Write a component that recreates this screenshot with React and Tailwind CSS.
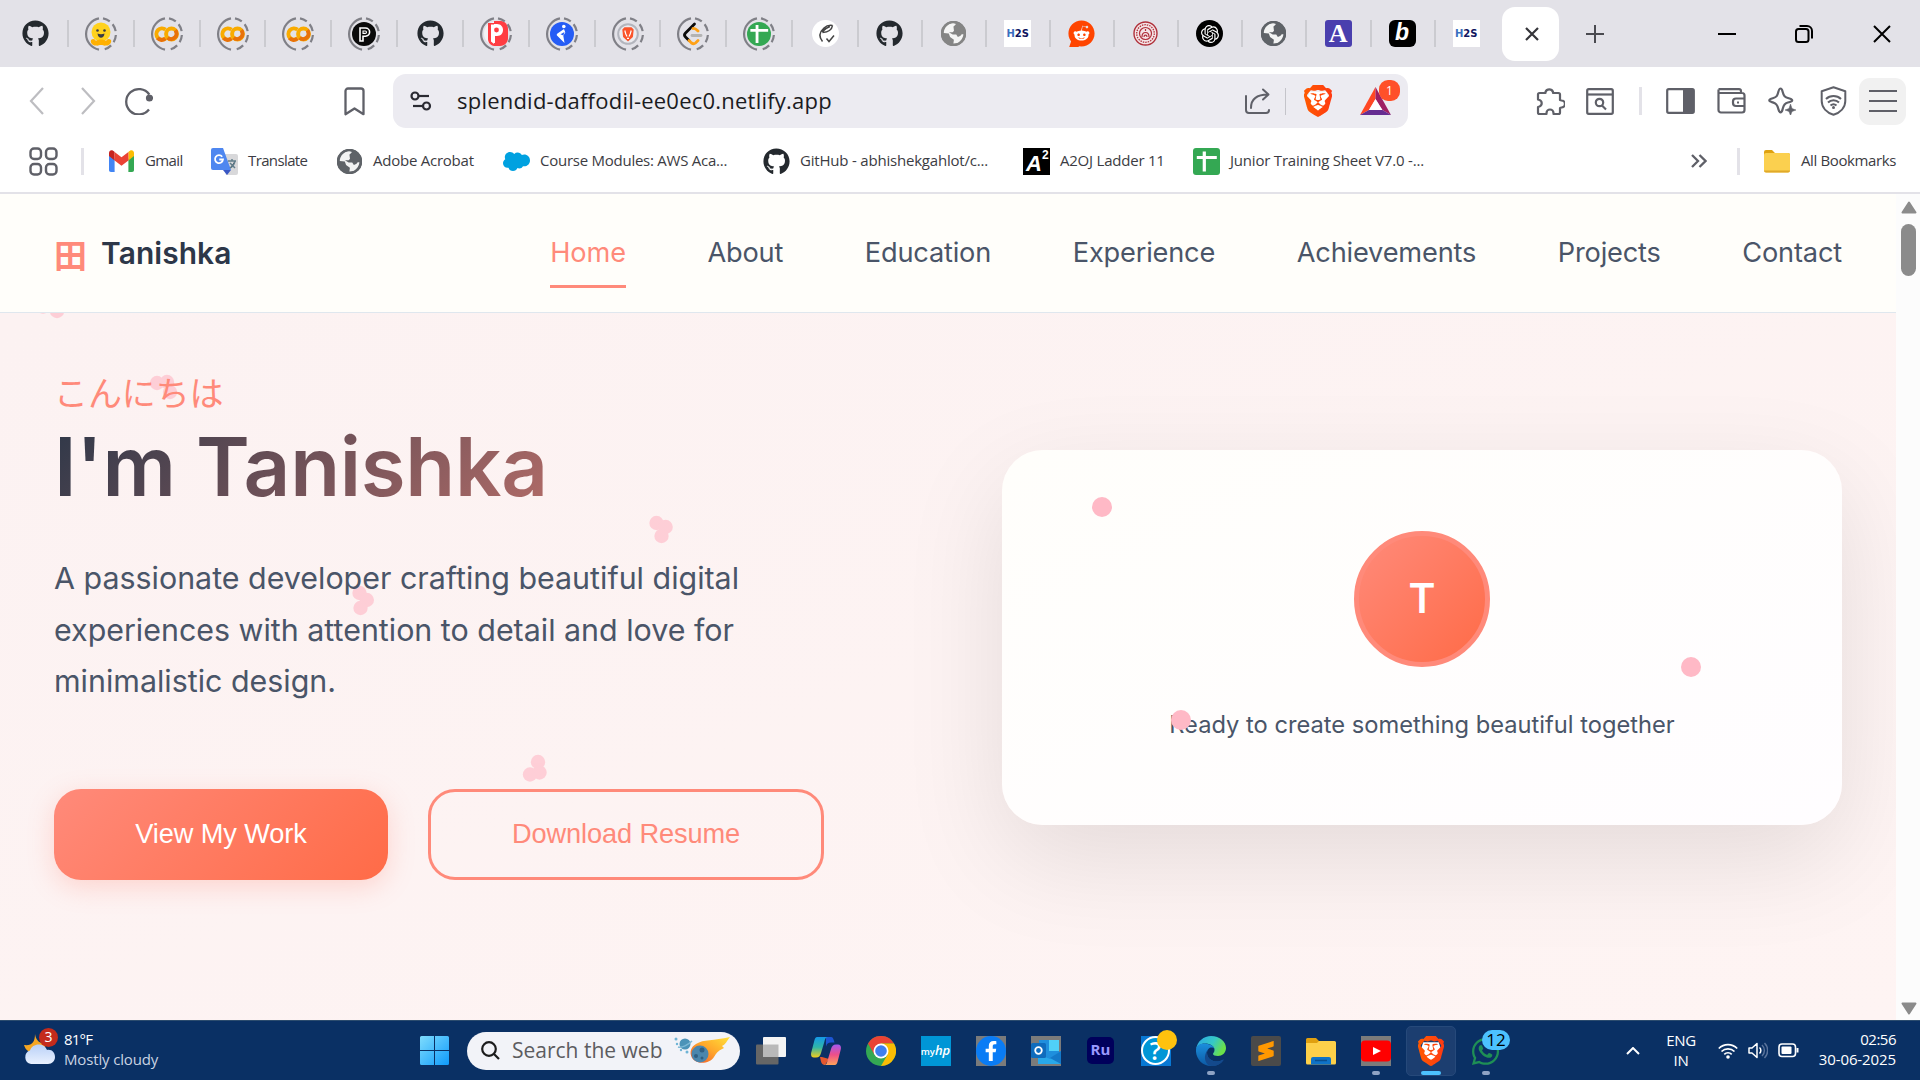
import React from "react";
import { FaGithub, FaWhatsapp, FaFacebookF, FaReddit } from "react-icons/fa";
import { SiOpenai, SiBrave, SiSalesforce, SiSublimetext } from "react-icons/si";

/* ---------- small brand drawings ---------- */

const Globe = ({ color = "#5f6368", size = 25 }) => (
  <svg width={size} height={size} viewBox="0 0 24 24">
    <circle cx="12" cy="12" r="12" fill={color} />
    <path d="M9.2 2.6c2-.5 3.8-.4 5.2.2L12 5.500l2.300 2-3.100 3.200H7.600l3.600 2.300h3.400l1.600 2.400 2.600-1.200c.7-1.600 1.400-1.600 2.700-1.500-.3 3.600-2.600 7-5.900 8.500l-3.700.4.500-3.600-3.700-2.600-1.200-3.400-4.800-.4C2.700 7.500 5.300 3.900 9.200 2.600z" fill="#fff" fillOpacity=".92" />
    <circle cx="12" cy="12" r="11.200" fill="none" stroke={color} strokeWidth="2" />
    <path d="M12 5.500l5-2 4 4.500.8 3.500-5.800-1-3.500-1z" fill={color} />
  </svg>
);

const Colab = () => (
  <svg width="25" height="16" viewBox="0 0 25 16" fill="none" strokeWidth="4">
    <path d="M11.500 3.600A5.600 5.600 0 1 0 11.500 12.400" stroke="#f9ab00" />
    <path d="M11.500 12.400A5.600 5.600 0 0 1 3.500 12" stroke="#e8710a" />
    <circle cx="17.500" cy="8" r="5.400" stroke="#f9ab00" />
    <path d="M13.700 11.800A5.400 5.400 0 0 0 21.300 4.200" stroke="#e8710a" />
  </svg>
);

const Hugging = () => (
  <svg width="22" height="24" viewBox="0 0 22 24">
    <circle cx="11" cy="10" r="9.500" fill="#ffd21e" />
    <path d="M1 18c2-2 4-1 5 1 2-2 8-2 10 0 1-2 3-3 5-1 1 3-2 6-5 5.500-2 .5-3-.5-5-.5s-3 1-5 .5C3 24 0 21 1 18z" fill="#ffb000" />
    <circle cx="7.500" cy="8.500" r="1.300" fill="#3a3b45" />
    <circle cx="14.500" cy="8.500" r="1.300" fill="#3a3b45" />
    <path d="M7.500 11.500c2 1 5 1 7 0-.3 3-1.800 4.200-3.500 4.200S7.800 14.500 7.500 11.500z" fill="#3a3b45" />
  </svg>
);

const Parallel = () => (
  <svg width="24" height="24" viewBox="0 0 24 24">
    <circle cx="12" cy="12" r="12" fill="#0b0b0b" />
    <path d="M8 19V6h5.500a4 4 0 0 1 0 8.200H11V19z" fill="none" stroke="#fff" strokeWidth="1.600" />
    <path d="M11 9h2.300a1.200 1.200 0 0 1 0 2.400H11z" fill="none" stroke="#fff" strokeWidth="1.100" />
  </svg>
);

const RedP = () => (
  <svg width="24" height="25" viewBox="0 0 24 25">
    <circle cx="12" cy="12.500" r="12" fill="#fff" fillOpacity=".6" />
    <path d="M10 0h7c4 0 7 4 7 8v9c0 4-3 8-8 8h-6z" fill="#ff3d42" />
    <path d="M6 3h7c8 0 8 12 0 12h-2v7H6z" fill="#fff" />
    <path d="M4 2h6v1.500H7v17l3 2.500v2C5 24 4 20 4 18z" fill="#ff3d42" />
    <circle cx="12.500" cy="9" r="2.400" fill="#ff3d42" />
  </svg>
);

const BlueRunner = () => (
  <svg width="24" height="24" viewBox="0 0 24 24">
    <circle cx="12" cy="12" r="12" fill="#255cf5" />
    <circle cx="13.800" cy="4.500" r="1.800" fill="#fff" />
    <path d="M14 7L7.500 11.500c-1 .8-1 1.700 0 2.500L14.500 21l-1.200-7.300 2-3.200z" fill="#fff" />
    <path d="M10.500 12.300l4-2.300-1.200 3.600z" fill="#255cf5" />
  </svg>
);

const BraveRing = () => (
  <svg width="26" height="26" viewBox="0 0 26 26">
    <circle cx="13" cy="13" r="9.800" fill="#ececf0" stroke="#b3b5bd" strokeWidth="2" />
    <path d="M7.300 8.500l2.200-2.200h7l2.200 2.200-.8 7.500L13 20.500 8.100 16z" fill="#fb542b" />
    <path d="M9.800 9.500l1 3.500 1.200 2.500m4.200-6l-1 3.500-1.200 2.500M12 17.300h2" stroke="#fff" strokeWidth="1.200" fill="none" />
  </svg>
);

const Leet = () => (
  <svg width="24" height="24" viewBox="0 0 24 24" fill="none" strokeLinecap="round" strokeWidth="2.800">
    <path d="M13.500 2L4.500 11c-1.500 1.500-1 3 0 4l3.500 3.500" stroke="#0b0b0b" strokeLinejoin="round" />
    <path d="M12 6.500c1.500-.8 2.500 0 5 2.500M8 18.500l2.500 2.500c1.500 1 3 .8 4 0l2.500-2.500" stroke="#ffa116" />
    <path d="M11 13.500h9" stroke="#b3b3b3" />
  </svg>
);

const GreenCross = ({ round, size = 27 }) => (
  <svg width={size} height={size} viewBox="0 0 27 27">
    <rect width="27" height="27" rx={round ? 13.5 : 3} fill="#34a853" />
    <path d="M11.300 3.500v20M3.800 9.500h20" stroke="#fff" strokeWidth="3.200" />
  </svg>
);

const Leaf = () => (
  <svg width="27" height="27" viewBox="0 0 27 27" fill="none" stroke="#444" strokeWidth="1.500">
    <circle cx="13.500" cy="13.500" r="13.500" fill="#fff" stroke="none" />
    <path d="M20.500 5.500c-3-.5-6 .2-8.500 2.500-4.500 4-5.500 8.500-1.500 13.500M20.500 5.500c-.5 3.500-3.500 6.500-10 7M10 12c2.500-3 5-4.500 8-5.500M14.500 18.500l2.500 3 5-6" />
  </svg>
);

const H2S = () => (
  <span className="flex h-[27px] w-[27px] items-center justify-center bg-white font-['DejaVu_Sans'] text-[10px] font-bold tracking-[-0.1px] text-[#101560]">
    <span className="text-[#3a6fc0]">H</span>2S
  </span>
);

const RedSeal = () => (
  <svg width="25" height="25" viewBox="0 0 25 25" fill="none" stroke="#b0303a">
    <circle cx="12.500" cy="12.500" r="11.500" fill="#f4e4e6" strokeWidth="1.400" />
    <circle cx="12.500" cy="12.500" r="8.800" strokeWidth="1.300" strokeDasharray="1.500 1" />
    <circle cx="12.500" cy="12.500" r="6" strokeWidth="1.200" />
    <path d="M9 16c0-6 7-6 7 0M11 16c0-2.500 3-2.500 3 0M12.500 8v2" strokeWidth="1.200" />
  </svg>
);

const OpenAi = () => (
  <span className="flex h-[27px] w-[27px] items-center justify-center rounded-full bg-black text-white">
    <SiOpenai size={18} />
  </span>
);

const Reddit = () => (
  <span className="relative flex h-[27px] w-[27px] items-center justify-center">
    <span className="absolute left-[5px] top-[8px] h-[13px] w-[18px] rounded-full bg-white" />
    <FaReddit size={27} color="#ff4500" className="relative" />
    <span className="absolute bottom-0 left-[1px] h-[9px] w-[10px] rounded-tr-full bg-[#ff4500] [clip-path:polygon(30%_0,100%_100%,0_100%)]" />
  </span>
);

const Bat = () => (
  <svg width="31" height="28" viewBox="0 0 31 28">
    <path d="M15.500 0L0 28l9-5 6.500-11z" fill="#ff4724" />
    <path d="M15.500 0L31 28l-8.500-5-7-11z" fill="#9e1f63" />
    <path d="M0 28h31l-8.500-5H9z" fill="#662d91" />
    <path d="M15.500 12l6.700 11H9z" fill="#fff" />
  </svg>
);

const BraveLion = ({ w, h, id }) => (
  <svg width={w} height={h} viewBox="2 0 20 24" preserveAspectRatio="none">
    <defs>
      <linearGradient id={id} x1="0" x2="1">
        <stop offset="0" stopColor="#ff5a00" />
        <stop offset="1" stopColor="#ff3a12" />
      </linearGradient>
    </defs>
    <path d="M6 5h12l1.500 5-3 8L12 21l-4.500-3-3-8z" fill="#fff" />
    <SiBrave size={24} fill={`url(#${id})`} />
  </svg>
);

const Gmail = () => (
  <svg width="25" height="22" viewBox="0 0 25 22">
    <path d="M0 3v17c0 1 .7 2 2 2h3.600V9z" fill="#4285f4" />
    <path d="M25 3v17c0 1-.7 2-2 2h-3.600V9z" fill="#34a853" />
    <path d="M19.400 2v8.500L25 6V3c0-3-3.300-4-5.600-1z" fill="#fbbc04" />
    <path d="M5.600 2v8.500L0 6V3c0-3 3.300-4 5.600-1z" fill="#c5221f" />
    <path d="M5.600 10.500V2l6.900 5.300L19.400 2v8.500l-6.900 5.300z" fill="#ea4335" />
  </svg>
);

const Translate = () => (
  <svg width="27" height="27" viewBox="0 0 27 27">
    <path d="M11 6h14a2 2 0 0 1 2 2v17a2 2 0 0 1-2 2H15z" fill="#d8d8da" />
    <path d="M12 22h8l-4 5z" fill="#3a57c4" />
    <path d="M2 0h10l8 22H2a2 2 0 0 1-2-2V2a2 2 0 0 1 2-2z" fill="#4e87f0" />
    <path d="M17 13h8M21 11v2M24 13c-1 4-3 6-5 7M19 15l5 5" stroke="#607d8b" strokeWidth="1.500" />
    <path d="M11.200 8.700A4 4 0 1 0 12 11.500H8.300" fill="none" stroke="#fff" strokeWidth="1.800" />
  </svg>
);

/* ---------- tab strip ---------- */

const Ring = ({ children }) => (
  <span className="relative flex h-[34px] w-[34px] items-center justify-center">
    <svg className="absolute inset-0" width="34" height="34" viewBox="0 0 34 34" fill="none" stroke="#808087" strokeWidth="2.200">
      <path d="M15 1.300A16 16 0 0 0 15 32.700" />
      <path d="M19 1.300A16 16 0 0 1 19 32.700" strokeDasharray="7.500 4" strokeDashoffset="0" />
    </svg>
    {children}
  </span>
);

const octo = <FaGithub size={27} color="#24292e" />;
const ringTabs = [
  <Ring><Hugging /></Ring>,
  <Ring><Colab /></Ring>,
  <Ring><Colab /></Ring>,
  <Ring><Colab /></Ring>,
  <Ring><Parallel /></Ring>,
  octo,
  <Ring><RedP /></Ring>,
  <Ring><BlueRunner /></Ring>,
  <Ring><BraveRing /></Ring>,
  <Ring><Leet /></Ring>,
  <Ring><GreenCross round size={24} /></Ring>,
  <Leaf />,
];
const plainTabs = [
  octo,
  <Globe color="#858585" />,
  <H2S />,
  <Reddit />,
  <RedSeal />,
  <OpenAi />,
  <Globe />,
  <span className="flex h-[27px] w-[27px] items-center justify-center rounded-[3px] bg-[#4a3fae] font-['Liberation_Serif'] text-[26px] font-bold leading-none text-white">A</span>,
  <span className="flex h-[27px] w-[27px] items-center justify-center rounded-[6px] bg-black pb-[3px] font-['Liberation_Sans'] text-[23px] font-bold italic leading-none text-white">b</span>,
];

const Sep = () => <span className="h-[27px] w-[2px] shrink-0 bg-[#cbcbd0]" />;

function TabStrip() {
  return (
    <div className="flex h-[67px] shrink-0 items-center bg-[#e3e2e8]">
      <div className="flex w-[67px] shrink-0 items-center justify-center pl-[4px]">{octo}</div>
      <Sep />
      {ringTabs.map((t, i) => (
        <React.Fragment key={i}>
          <div className="flex w-[63.830px] shrink-0 items-center justify-center">{t}</div>
          <Sep />
        </React.Fragment>
      ))}
      {plainTabs.map((t, i) => (
        <React.Fragment key={i}>
          <div className="flex w-[62.080px] shrink-0 items-center justify-center pr-[1px]">{t}</div>
          <Sep />
        </React.Fragment>
      ))}
      <div className="flex w-[61px] shrink-0 items-center justify-center">
        <H2S />
      </div>
      <div className="ml-[5px] flex h-[54px] w-[57px] shrink-0 items-center justify-center rounded-[13px] bg-white pl-[3px]">
        <svg width="14" height="14" viewBox="0 0 14 14" stroke="#35353a" strokeWidth="2.200"><path d="M1 1l12 12M13 1L1 13" /></svg>
      </div>
      <svg className="ml-[27px] shrink-0" width="18" height="18" viewBox="0 0 18 18" stroke="#4a4a50" strokeWidth="2"><path d="M9 0v18M0 9h18" /></svg>
      <span className="ml-[114px] h-[2px] w-[18px] shrink-0 bg-black" />
      <svg className="ml-[59px] shrink-0" width="18" height="18" viewBox="0 0 18 18" fill="none" stroke="#000" strokeWidth="2">
        <rect x="1" y="4" width="12.500" height="13" rx="2.500" />
        <path d="M4.500 1H12a5 5 0 0 1 5 5v7.500" />
      </svg>
      <svg className="ml-[60px] shrink-0" width="18" height="18" viewBox="0 0 18 18" stroke="#000" strokeWidth="2"><path d="M1 1l16 16M17 1L1 17" /></svg>
    </div>
  );
}

/* ---------- toolbar ---------- */

function Toolbar() {
  return (
    <div className="flex h-[68px] shrink-0 items-center bg-white text-[#5f6068]">
      <svg className="ml-[29px] shrink-0" width="15" height="28" viewBox="0 0 15 28" fill="none" stroke="#bdbdc1" strokeWidth="2.200"><path d="M14 1L2 14l12 13" /></svg>
      <svg className="ml-[37px] shrink-0" width="15" height="28" viewBox="0 0 15 28" fill="none" stroke="#bdbdc1" strokeWidth="2.200"><path d="M1 1l12 13L1 27" /></svg>
      <svg className="ml-[29px] shrink-0" width="28" height="28" viewBox="0 0 28 28" fill="none" stroke="currentColor" strokeWidth="2.300">
        <path d="M24 22.500A12.700 12.700 0 1 1 24.300 7.500" />
        <circle cx="24.500" cy="11" r="3.600" fill="currentColor" stroke="none" />
      </svg>
      <svg className="ml-[191px] shrink-0" width="21" height="29" viewBox="0 0 21 29" fill="none" stroke="currentColor" strokeWidth="2.300" strokeLinejoin="round"><path d="M4 1.500h13A2.500 2.500 0 0 1 19.500 4v23.200L10.500 21.500 1.500 27.200V4A2.500 2.500 0 0 1 4 1.500z" /></svg>
      <div className="ml-[28px] flex h-[54px] w-[1015px] shrink-0 items-center rounded-[13px] bg-[#ecebf1]">
        <svg className="ml-[17px] shrink-0" width="22" height="20" viewBox="0 0 22 20" fill="none" stroke="#2b2b33" strokeWidth="2.200">
          <circle cx="5" cy="5" r="3.500" /><path d="M8.500 5H19" />
          <circle cx="16.500" cy="15" r="3.500" /><path d="M3 15h10" />
        </svg>
        <span className="ml-[25px] w-[761px] whitespace-nowrap pb-[2px] text-[22px] tracking-[0.220px] text-[#1b1b22]">splendid-daffodil-ee0ec0.netlify.app</span>
        <svg className="ml-[26px] shrink-0" width="27" height="27" viewBox="0 0 27 27" fill="none" stroke="#5f6068" strokeWidth="2" strokeLinecap="round" strokeLinejoin="round">
          <path d="M2 8v14a3 3 0 0 0 3 3h17a3 3 0 0 0 3-3" />
          <path d="M7 20C7 11 13 6.500 24 6.500M19 1.500l5.500 5-5.500 5" />
        </svg>
        <span className="ml-[14px] h-[27px] w-[1px] bg-[#c4c4ca]" />
        <span className="ml-[18px]"><BraveLion w={28} h={32} id="lionTop" /></span>
        <span className="relative ml-[28px]">
          <Bat />
          <span className="absolute -top-[7px] left-[19px] flex h-[21px] w-[21px] items-center justify-center rounded-[9px] bg-[#ff5029] text-[12px] text-white">1</span>
        </span>
      </div>
      <svg className="ml-[128px] shrink-0" width="29" height="29" viewBox="0 0 29 29" fill="none" stroke="currentColor" strokeWidth="2.200" strokeLinejoin="round"><path d="M3.500 6H9.500V5a4 4 0 0 1 7.500 0v1h5.500A1.500 1.500 0 0 1 24 7.500V13l1.500.5a3.500 3.500 0 0 1 0 7L24 21v4.500a1.500 1.500 0 0 1-1.500 1.500h-5v-1a3.500 3.500 0 0 0-7 0v1h-7A1.500 1.500 0 0 1 2 25.500V20l1.500-.5a3.500 3.500 0 0 0 0-6.500L2 12.500v-5A1.500 1.500 0 0 1 3.500 6z" /></svg>
      <svg className="ml-[21px] shrink-0" width="28" height="27" viewBox="0 0 28 27" fill="none" stroke="currentColor" strokeWidth="2.200">
        <rect x="1.200" y="1.200" width="25.600" height="24.600" rx="1.500" /><path d="M1 6.500h26" />
        <circle cx="13.500" cy="14.500" r="3.700" /><path d="M16 17.500l4 4" />
      </svg>
      <span className="ml-[25px] h-[28px] w-[3px] shrink-0 bg-[#e3e2e8]" />
      <svg className="ml-[24px] shrink-0" width="29" height="26" viewBox="0 0 29 26" fill="none" stroke="currentColor" strokeWidth="2.200">
        <rect x="1.200" y="1.200" width="26.600" height="23.600" rx="1.500" /><path d="M17 1h9.500a1.500 1.500 0 0 1 1.500 1.500v21a1.500 1.500 0 0 1-1.500 1.500H17z" fill="currentColor" stroke="none" />
      </svg>
      <svg className="ml-[22px] shrink-0" width="29" height="26" viewBox="0 0 29 26" fill="none" stroke="currentColor" strokeWidth="2.200" strokeLinejoin="round">
        <path d="M24 5V3a2 2 0 0 0-2-1.800H1.500M1.500 5H25a2.500 2.500 0 0 1 2.500 2.500V22a2.500 2.500 0 0 1-2.500 2.500H4A2.500 2.500 0 0 1 1.500 22V1.500" />
        <path d="M27 10.500h-8a3 3 0 0 0-3 3v1.500a3 3 0 0 0 3 3h8M20 14.500h2" />
      </svg>
      <svg className="ml-[22px] shrink-0" width="28" height="28" viewBox="0 0 28 28" fill="none" stroke="currentColor" strokeWidth="2.200" strokeLinejoin="round">
        <path d="M12.500 1.500c1.500 0 1.700 1.500 2.200 3.500 1 4 2 5 6 6.200 2 .6 3.500.8 3.500 2.100s-1.500 1.400-3.500 2c-4 1.200-5 2.500-6 6.500-.5 2-.7 3.500-2.200 3.500s-1.700-1.500-2.200-3.500c-1-4-2-5.300-5.500-6.400-2-.6-3.500-.8-3.500-2.100s1.500-1.500 3.500-2.100c4-1.200 4.500-2.200 5.500-6.200.5-2 .7-3.500 2.200-3.500z" />
        <path d="M22.500 17l1.500 4.500 4 1.500-4 1.500-1.500 4-1.500-4-4-1.500 4-1.500z" fill="currentColor" strokeWidth=".5" />
      </svg>
      <svg className="ml-[24px] shrink-0" width="27" height="30" viewBox="0 0 27 30" fill="none" stroke="currentColor" strokeWidth="2">
        <path d="M13.500 1.300l11.800 4V15c0 6.500-5 11.500-11.800 13.800C6.700 26.500 1.700 21.500 1.700 15V5.300z" strokeLinejoin="round" />
        <path d="M6 13c4-4 11-4 15 0M8 16.500c3-3 8-3 11 0M10.500 19.500c2-1.700 4-1.700 6 0" />
        <circle cx="13.500" cy="21.500" r="1.500" fill="currentColor" stroke="none" />
      </svg>
      <div className="ml-[12px] flex h-[47px] w-[47px] shrink-0 flex-col items-center justify-center gap-[8px] rounded-[11px] bg-[#f1f1f1]">
        <span className="h-[2px] w-[28px] bg-[#5f6068]" /><span className="h-[2px] w-[28px] bg-[#5f6068]" /><span className="h-[2px] w-[28px] bg-[#5f6068]" />
      </div>
    </div>
  );
}

const bookmarks = [
  { w: "w-[103px]", icon: <Gmail />, text: "Gmail", t: "tracking-[-0.62px]" },
  { w: "w-[125px]", icon: <Translate />, text: "Translate", t: "tracking-[-0.62px]" },
  { w: "w-[167px]", icon: <Globe />, text: "Adobe Acrobat", t: "tracking-[-0.24px]" },
  { w: "w-[260px]", icon: <SiSalesforce size={27} color="#00a1e0" />, text: "Course Modules: AWS Aca...", t: "tracking-[-0.25px]" },
  { w: "w-[260px]", icon: octo, text: "GitHub - abhishekgahlot/c...", t: "tracking-[-0.2px]" },
  { w: "w-[170px]", icon: <span className="flex h-[27px] w-[27px] bg-black pl-[3px] font-['Liberation_Sans'] text-[22px] font-bold italic leading-[31px] text-white">A<span className="text-[12px] not-italic leading-[14px]">2</span></span>, text: "A2OJ Ladder 11", t: "tracking-[-0.22px]" },
  { w: "w-[240px]", icon: <GreenCross />, text: "Junior Training Sheet V7.0 -...", t: "tracking-[-0.2px]" },
];

function BookmarksBar() {
  return (
    <div className="flex h-[59px] shrink-0 items-center border-b-2 border-[#e3e2e8] bg-white pb-[5px] text-[15px] text-[#3c3c43]">
      <svg className="ml-[29px] shrink-0" width="29" height="29" viewBox="0 0 29 29" fill="none" stroke="#5f6068" strokeWidth="2.400">
        <rect x="1.500" y="1.500" width="10.500" height="10.500" rx="3.500" /><rect x="17" y="1.500" width="10.500" height="10.500" rx="3.500" />
        <rect x="1.500" y="17" width="10.500" height="10.500" rx="3.500" /><rect x="17" y="17" width="10.500" height="10.500" rx="3.500" />
      </svg>
      <span className="ml-[23px] h-[27px] w-[3px] shrink-0 bg-[#e3e2e8]" />
      <div className="ml-[24px] flex">
        {bookmarks.map((b) => (
          <div key={b.text} className={`flex shrink-0 items-center gap-[10px] ${b.w}`}>
            <span className="flex h-[27px] w-[27px] shrink-0 items-center justify-center">{b.icon}</span>
            <span className={`whitespace-nowrap pb-[1px] ${b.t}`}>{b.text}</span>
          </div>
        ))}
      </div>
      <svg className="ml-auto shrink-0" width="16" height="14" viewBox="0 0 16 14" fill="none" stroke="#5f6068" strokeWidth="2.300"><path d="M1 1l6 6-6 6M8.500 1l6 6-6 6" /></svg>
      <span className="ml-[30px] h-[27px] w-[3px] shrink-0 bg-[#e3e2e8]" />
      <svg className="ml-[24px] shrink-0" width="26" height="23" viewBox="0 0 26 23">
        <path d="M0 2a2 2 0 0 1 2-2h6l3 3h13a2 2 0 0 1 2 2v5H0z" fill="#dfa210" />
        <rect y="3" width="26" height="19.500" rx="2" fill="#fbd04f" /><path d="M0 20.500a2 2 0 0 0 2 2h22a2 2 0 0 0 2-2z" fill="#e0a92b" />
      </svg>
      <span className="ml-[11px] mr-[24px] w-[95px] whitespace-nowrap pb-[1px] tracking-[-0.380px]">All Bookmarks</span>
    </div>
  );
}

/* ---------- page ---------- */

const links = ["Home", "About", "Education", "Experience", "Achievements", "Projects", "Contact"];

function SiteHeader() {
  return (
    <header className="flex h-[119px] items-center justify-between border-b border-[#dfe7ee] bg-[#fffefa] px-[54px] font-['Inter']">
      <div className="flex items-center gap-[14px] pt-[1px]">
        <span className="w-[33px] font-['Noto_Sans_CJK_JP',sans-serif] text-[33px] font-bold leading-[34px] text-[#ff8a7a]">田</span>
        <span className="text-[29.920px] font-semibold tracking-[0.080px] text-[#2d3748]">Tanishka</span>
      </div>
      <nav className="flex gap-[81.600px] text-[27.200px] tracking-[-0.180px]">
        {links.map((l, i) => (
          <a key={l} className={i === 0 ? "relative leading-[40px] text-[#ff8a7a]" : "leading-[40px] text-[#4a5568]"}>
            {l}
            {i === 0 && <span className="absolute -bottom-[15px] left-0 h-[3px] w-full bg-[#ff8a7a]" />}
          </a>
        ))}
      </nav>
    </header>
  );
}

const petals = [
  [[157, 383], [167, 382], [170, 392]],
  [[57, 311], [43, 306.5], [52, 301]],
  [[656.5, 523], [665.6, 527], [661.5, 536]],
  [[359.5, 593], [366.8, 600], [360.5, 608]],
  [[538, 762], [539.5, 772.5], [530, 774.5]],
];

function Petals() {
  return (
    <svg className="pointer-events-none absolute inset-0" width="1896" height="707" viewBox="0 313 1896 707">
      {petals.map((p, i) => (
        <g key={i} fill="#ffb7c5" opacity=".6">
          {p.map(([x, y], j) => <circle key={j} cx={x} cy={y} r="7.200" />)}
        </g>
      ))}
    </svg>
  );
}

function Hero() {
  return (
    <section className="relative h-[707px] overflow-hidden bg-linear-to-br from-[#fcf2f2] to-[#fef4f3] px-[54px] font-['Inter']">
      <Petals />
      <div className="relative grid h-full grid-cols-[839px_840px] justify-between">
        <div className="pt-[56px]">
          <p className="h-[46px] font-['Noto_Sans_CJK_JP',sans-serif] text-[34px] leading-[46px] tracking-[-0.1px] text-[#ff8a7a]">こんにちは</p>
          <h1 className="mt-[3px] bg-[linear-gradient(135deg,#2d3748,#ff8a7a)] bg-clip-text text-[81.600px] font-semibold leading-[98px] tracking-[-0.3px] text-transparent">I'm Tanishka</h1>
          <p className="mt-[37px] whitespace-nowrap text-[30.400px] leading-[51.700px] text-[#4a5568]">
            A passionate developer crafting beautiful digital<br />experiences with attention to detail and love for<br />minimalistic design.
          </p>
          <div className="mt-[81px] flex gap-[40px] font-['Liberation_Sans'] text-[27.200px] tracking-[-0.1px]">
            <button className="h-[91px] w-[334px] rounded-[27px] bg-[linear-gradient(135deg,#ff8a7a,#ff6b47)] pb-[1px] text-white shadow-[0_7px_26px_rgba(255,138,122,0.3)]">View My Work</button>
            <button className="h-[91px] w-[396px] rounded-[27px] border-[3px] border-[#ff8a7a] pb-[1px] text-[#ff8a7a]">Download Resume</button>
          </div>
        </div>
        <div className="relative mt-[137px] flex h-[375px] flex-col items-center rounded-[41px] bg-linear-to-br from-[#fffefb] to-[#fffdff] shadow-[0_34px_102px_rgba(0,0,0,0.1)]">
          <div className="mt-[81px] flex h-[136px] w-[136px] items-center justify-center rounded-full border-[5px] border-[#ff8a7a] bg-[linear-gradient(135deg,#ff8a7a,#ff6b47)] text-[40.800px] font-semibold text-white">T</div>
          <p className="mt-[41px] text-[23.700px] leading-[34px] text-[#4a5568]">Ready to create something beautiful together</p>
          <span className="absolute left-[90px] top-[47px] h-[20px] w-[20px] rounded-full bg-[#ffb9c6]" />
          <span className="absolute left-[679px] top-[207px] h-[20px] w-[20px] rounded-full bg-[#ffb9c6]" />
          <span className="absolute left-[169px] top-[260px] h-[20px] w-[20px] rounded-full bg-[#ffb9c6]" />
        </div>
      </div>
    </section>
  );
}

function Scrollbar() {
  return (
    <div className="flex w-[24px] flex-col items-center justify-between bg-[#fcfcfc] pt-[7px] pb-[5px] pl-[1px]">
      <div className="flex flex-col items-center gap-[10px]">
        <svg width="16" height="13" viewBox="0 0 16 13"><path d="M8 1.500l6.500 10h-13z" fill="#8b8b8b" stroke="#8b8b8b" strokeWidth="2" strokeLinejoin="round" /></svg>
        <span className="h-[52px] w-[15px] rounded-full bg-[#8b8b8b]" />
      </div>
      <svg width="16" height="13" viewBox="0 0 16 13"><path d="M8 11.500l6.500-10h-13z" fill="#8b8b8b" stroke="#8b8b8b" strokeWidth="2" strokeLinejoin="round" /></svg>
    </div>
  );
}

/* ---------- taskbar ---------- */

const Weather = () => (
  <svg width="32" height="32" viewBox="0 0 32 32">
    <defs><linearGradient id="cl" x2="0" y2="1"><stop stopColor="#b9d0f7" /><stop offset="1" stopColor="#e9f1ff" /></linearGradient></defs>
    <path d="M11 1c0 8-3 12-11 11 2 7 8 9 14 7s8-6 8-9C15 11 12 7 11 1z" fill="#f5a623" />
    <path d="M7 31a7 7 0 0 1-1-13.500C8 10 20 9 23 17c5-1 8 3 8 7s-3 7-7 7z" fill="url(#cl)" />
  </svg>
);

const Windows = () => (
  <svg className="shrink-0" width="29" height="29" viewBox="0 0 29 29">
    <defs><linearGradient id="win" x2="1" y2="1"><stop stopColor="#7fdcfd" /><stop offset="1" stopColor="#0f9bfb" /></linearGradient></defs>
    <path d="M1.500 0H14v14H0V1.500A1.500 1.500 0 0 1 1.500 0zM15 0h12.500A1.500 1.500 0 0 1 29 1.500V14H15zM0 15h14v14H1.500A1.500 1.500 0 0 1 0 27.500zM15 15h14v12.500a1.500 1.500 0 0 1-1.500 1.500H15z" fill="url(#win)" />
  </svg>
);

const Comet = () => (
  <svg width="58" height="28" viewBox="0 0 58 28">
    <defs><linearGradient id="fl" x1="1" x2="0" y2="1"><stop stopColor="#ffe23a" /><stop offset=".5" stopColor="#ffa62b" /><stop offset="1" stopColor="#f0532d" /></linearGradient></defs>
    <circle cx="11" cy="7" r="5.500" fill="#4b93b8" /><path d="M4 10c4 1 10-2 14-6" stroke="#7db9d6" strokeWidth="1.600" fill="none" />
    <g fill="#6fb4d6"><circle cx="2" cy="2" r="1.500" /><circle cx="3" cy="7" r="1.200" /><circle cx="7" cy="13" r="1.200" /><circle cx="13" cy="15" r="1.500" /></g>
    <path d="M22 7c8-5 17-3 34-7-4 5-4 7-8 9l2 2c-7 3-8 6-10 9-4 7-18 8-22 1-3-6-1-11 4-14z" fill="url(#fl)" />
    <circle cx="26" cy="17" r="8.500" fill="#4a86ad" /><circle cx="28" cy="13" r="2.500" fill="#2f5f83" /><circle cx="22" cy="19" r="2" fill="#2f5f83" /><circle cx="28" cy="21" r="1.500" fill="#2f5f83" />
  </svg>
);

const TaskView = () => (
  <svg width="30" height="28" viewBox="0 0 30 28"><rect y="7.500" width="22.500" height="20" rx="1" fill="#666" /><rect x="7" width="23" height="20" rx="1" fill="#f4f4f4" /><rect x="7" y="7.500" width="15.500" height="12.500" fill="#b9b9b9" /></svg>
);

const Copilot = () => (
  <svg width="30" height="28" viewBox="0 0 30 28">
    <defs>
      <linearGradient id="ca" y2="1" x2="0"><stop stopColor="#1599e8" /><stop offset=".5" stopColor="#2fb6a8" /><stop offset="1" stopColor="#f3cf1c" /></linearGradient>
      <linearGradient id="cb" y2="1" x2="0"><stop stopColor="#a358f0" /><stop offset=".5" stopColor="#ee4f88" /><stop offset="1" stopColor="#ffa35a" /></linearGradient>
    </defs>
    <path d="M15 0h5c2 0 2.500 2 3.500 5.500H20c-3 0-4 1-5 4z" fill="#1d55d3" />
    <path d="M6 0h11c-3 0-3 3-4 6l-3 10c-1 3-2 4.500-5 4.500H3c-3 0-3.500-3-2.500-6L3.500 3C4 1 5 0 6 0z" fill="url(#ca)" />
    <path d="M11 20l-2 0c1 4 1 8 5 8l4-6z" fill="#e4572e" />
    <path d="M24 28H13c3 0 3-3 4-6l3-10c1-3 2-4.500 5-4.500h2c3 0 3.500 3 2.500 6L26.500 25c-.5 2-1.500 3-2.500 3z" fill="url(#cb)" />
  </svg>
);

const Chrome = () => (
  <svg width="30" height="30" viewBox="0 0 30 30">
    <circle cx="15" cy="15" r="15" fill="#34a853" />
    <path d="M2 7.500A15 15 0 0 1 28 7.500H15L8.500 18.700z" fill="#ea4335" />
    <path d="M28 7.500A15 15 0 0 1 15 30l6.500-11.300L15 7.500z" fill="#fbbc04" />
    <circle cx="15" cy="15" r="7.500" fill="#fff" /><circle cx="15" cy="15" r="5.800" fill="#3f7fee" />
  </svg>
);

const Outlook = () => (
  <svg width="30" height="30" viewBox="0 0 30 30">
    <rect width="30" height="30" fill="#7b7b7b" />
    <rect x="8" y="4" width="20" height="20" fill="#1f8fdd" /><rect x="18" y="4" width="10" height="11" fill="#50d0f8" />
    <path d="M7 28h23V15l-11 8-12-5z" fill="#28a8ea" /><path d="M19 22l11 6V15z" fill="#1479c9" />
    <rect y="7" width="15" height="15" rx="1.500" fill="#0f6cbd" /><circle cx="7.500" cy="14.500" r="3.300" fill="none" stroke="#fff" strokeWidth="1.800" />
  </svg>
);

const Edge = () => (
  <svg width="30" height="30" viewBox="0 0 30 30">
    <defs>
      <linearGradient id="ea" x2="1" y2=".4"><stop stopColor="#2aa5e8" /><stop offset=".6" stopColor="#36c9c6" /><stop offset="1" stopColor="#6ae04a" /></linearGradient>
      <linearGradient id="eb" x2="0" y2="1"><stop stopColor="#1b8fdd" /><stop offset="1" stopColor="#0c59a4" /></linearGradient>
    </defs>
    <path d="M0 14C1 5 8 0 15 0c9 0 15 6 15 12 0 5-4 8-8 8-3 0-5-1-5-2s1.500-1.500 1.500-4C18.500 10 14 7.500 9 7.500 4 7.500 1 10 0 14z" fill="url(#ea)" />
    <path d="M0 14c0-4 4-7 9-6.500C14 8 18 10 18.500 13 16 10 11 12 11 17c0 6 6 9 11 8.500 2-.2 4-1.500 5-1.500-3 5-8 6-12 6C6 30-.5 22 0 14z" fill="url(#eb)" />
    <path d="M11 17c0 6 6 9 11 8.500 2-.2 5-2.500 6-2-3 5-8 6.500-12 6.500C9 30 6 19 13 12.500 11.500 14 11 15 11 17z" fill="#14498c" />
  </svg>
);

const Explorer = () => (
  <svg width="30" height="30" viewBox="0 0 30 30">
    <path d="M0 3.500A1.500 1.500 0 0 1 1.500 2H10l3 3v5H0z" fill="#e0a010" /><path d="M0 7h11l2-2h15.500A1.500 1.500 0 0 1 30 6.500V27a1.500 1.500 0 0 1-1.500 1.500h-27A1.500 1.500 0 0 1 0 27z" fill="#fdd04a" />
    <path d="M5 28.500V23a2 2 0 0 1 2-2h16a2 2 0 0 1 2 2v5.500z" fill="#0f73c7" /><path d="M9 24.500h12" stroke="#0a4f8f" strokeWidth="1.500" />
  </svg>
);

const YouTube = () => (
  <svg width="30" height="30" viewBox="0 0 30 30"><rect width="30" height="30" fill="#7b7b7b" /><rect y="4.500" width="30" height="21" rx="4" fill="#f00" /><path d="M12 11l8 4-8 4z" fill="#fff" /></svg>
);

const Dot = () => <span className="absolute -bottom-[9px] left-1/2 h-[4px] w-[8px] -translate-x-1/2 rounded-full bg-[#8fa3c4]" />;

const apps = [
  <TaskView />,
  <Copilot />,
  <Chrome />,
  <span className="flex h-[30px] w-[30px] items-center justify-center bg-[#0096d6] text-[9.500px] font-semibold italic leading-none text-white"><span className="mt-[2px] not-italic">my</span><span className="text-[13px]">hp</span></span>,
  <span className="flex h-[30px] w-[30px] items-center justify-center bg-[#7b7b7b]"><span className="flex h-[30px] w-[30px] items-center justify-center rounded-full bg-[#0a7cf5] text-white"><FaFacebookF size={20} /></span></span>,
  <Outlook />,
  <span className="flex h-[27px] w-[27px] items-center justify-center rounded-[5px] bg-[#00005b] pb-[2px] text-[15px] font-bold leading-none text-[#9a99ff]">Ru</span>,
  <span className="relative flex h-[30px] w-[30px] items-center justify-center bg-[#0878d4]"><span className="flex h-[29px] w-[29px] items-center justify-center rounded-full border-2 border-white bg-[#0096d6] text-[25px] font-semibold leading-none text-white">?</span><span className="absolute -top-[6px] left-[16px] h-[20px] w-[20px] rounded-full bg-[#ffc20e]" /></span>,
  <span className="relative"><Edge /><Dot /></span>,
  <span className="flex h-[30px] w-[30px] items-center justify-center rounded-[2px] bg-[#4a4a4a]"><SiSublimetext size={20} color="#ff9800" /></span>,
  <Explorer />,
  <span className="relative"><YouTube /><Dot /></span>,
  <span className="relative flex h-[50px] w-[50px] items-center justify-center rounded-[5px] border border-[#26497a] bg-[#1c3e70]">
    <BraveLion w={26} h={30} id="lionBar" />
    <span className="absolute bottom-[0px] left-[14px] h-[4px] w-[20px] rounded-full bg-[#4cc2ff]" />
  </span>,
  <span className="relative h-[30px]">
    <FaWhatsapp size={31} color="#1f8f55" />
    <span className="absolute -top-[6px] left-[12px] flex h-[20px] w-[28px] items-center justify-center rounded-full bg-[#4cc2ff] text-[17px] leading-none text-black">12</span>
    <Dot />
  </span>,
];

function Taskbar() {
  return (
    <div className="flex h-[60px] shrink-0 items-center border-t border-[#2c4c6e] bg-[#0a3064] text-[15px] text-white">
      <div className="relative ml-[24px] shrink-0 pb-[4px]">
        <Weather />
        <span className="absolute -top-[5px] left-[15px] flex h-[19px] w-[19px] items-center justify-center rounded-full bg-[#c42b1c] text-[14px] leading-none">3</span>
      </div>
      <div className="ml-[8px] w-[356px] shrink-0 pb-[3px] leading-[20px]">
        <div className="tracking-[-0.8px]">81°F</div>
        <div className="tracking-[-0.150px] text-[#c9d3e2]">Mostly cloudy</div>
      </div>
      <Windows />
      <div className="ml-[18px] flex h-[38px] w-[273px] shrink-0 items-center rounded-full bg-[#f2f3f8]">
        <svg className="ml-[14px] shrink-0" width="19" height="19" viewBox="0 0 19 19" fill="none" stroke="#1c1c1c" strokeWidth="2.200"><circle cx="8" cy="8" r="6.800" /><path d="M13 13l5 5" /></svg>
        <span className="ml-[12px] w-[152px] whitespace-nowrap text-[21px] tracking-[0px] text-[#5c5c60]">Search the web</span>
        <span className="ml-[10px]"><Comet /></span>
      </div>
      <div className="ml-[3px] flex shrink-0">
        {apps.map((a, i) => <div key={i} className="flex h-[59px] w-[55px] shrink-0 items-center justify-center">{a}</div>)}
      </div>
      <svg className="ml-[113px] shrink-0" width="14" height="8" viewBox="0 0 14 8" fill="none" stroke="#fff" strokeWidth="2"><path d="M1 7l6-6 6 6" /></svg>
      <div className="ml-[24px] w-[34px] shrink-0 pb-[2px] text-center leading-[20px] tracking-[-0.3px]">ENG<br />IN</div>
      <svg className="ml-[20px] shrink-0" width="20" height="17" viewBox="0 0 20 17" fill="none" stroke="#fff" strokeWidth="1.700">
        <path d="M.8 6.500a13 13 0 0 1 18.400 0M3.500 9.500a9.200 9.200 0 0 1 13 0M6.300 12.300a5.200 5.200 0 0 1 7.400 0" /><circle cx="10" cy="15" r="1.800" fill="#fff" stroke="none" />
      </svg>
      <svg className="ml-[10px] shrink-0" width="20" height="17" viewBox="0 0 20 17" fill="none" stroke="#fff" strokeWidth="1.500" strokeLinejoin="round">
        <path d="M1 6v5h3l5 4.500v-14L4 6z" /><path d="M11.500 5.500a4 4 0 0 1 0 6" /><path d="M14 3a7.500 7.500 0 0 1 0 11M16.500 1a10.500 10.500 0 0 1 0 15" stroke="#5a739b" />
      </svg>
      <svg className="ml-[10px] shrink-0" width="21" height="15" viewBox="0 0 21 15" fill="none" stroke="#fff" strokeWidth="1.600"><rect x="1" y="1" width="16.500" height="12.500" rx="3" /><rect x="3.500" y="3.500" width="10" height="7.500" rx="1" fill="#fff" stroke="none" /><path d="M19.500 5v4.500" strokeWidth="2" /></svg>
      <div className="ml-auto mr-[24px] pb-[3px] text-right leading-[20px]">
        <div className="tracking-[-0.5px]">02:56</div>
        <div className="tracking-[-0.1px]">30-06-2025</div>
      </div>
    </div>
  );
}

export default function App() {
  return (
    <div className="flex h-[1080px] w-[1920px] flex-col overflow-hidden bg-white font-['Open_Sans',sans-serif]">
      <TabStrip />
      <Toolbar />
      <BookmarksBar />
      <div className="flex h-[826px] shrink-0">
        <main className="w-[1896px] shrink-0">
          <SiteHeader />
          <Hero />
        </main>
        <Scrollbar />
      </div>
      <Taskbar />
    </div>
  );
}
